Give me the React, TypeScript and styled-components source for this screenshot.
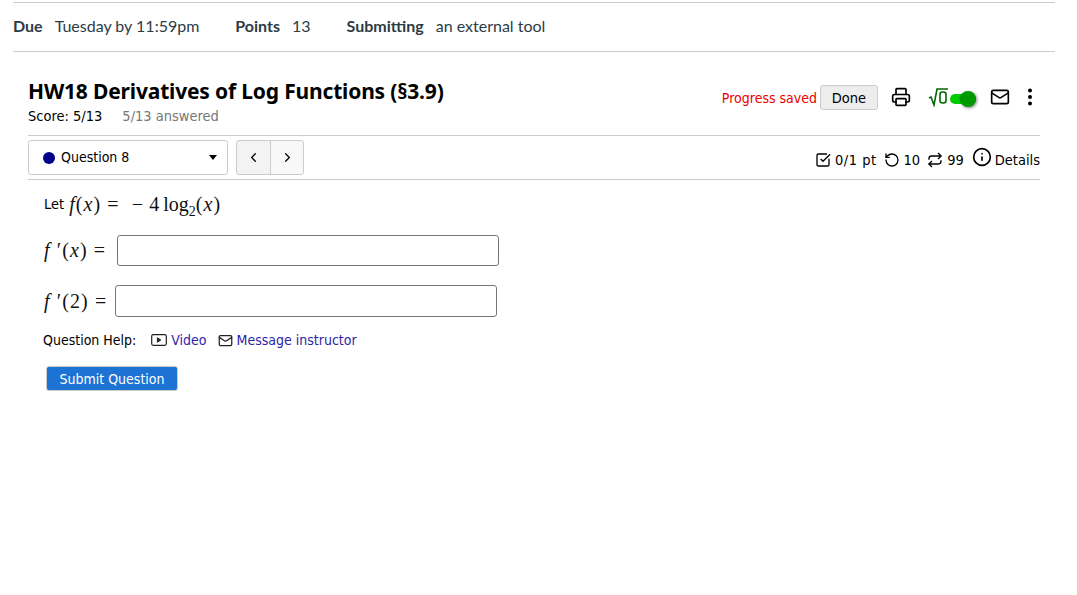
import React from "react";
import styled, { createGlobalStyle } from "styled-components";
import { Printer, Mail, ChevronLeft, ChevronRight, CheckSquare, RotateCcw, Repeat, Info } from "lucide-react";

const Global = createGlobalStyle`
  html, body { margin: 0; padding: 0; background: #fff; }
  body { font-family: "DejaVu Sans Condensed", "DejaVu Sans", sans-serif; }
`;
const Page = styled.div`
  width: 1042px;
  height: 595px;
  margin-left: 13px;
  padding-top: 2px;
  box-sizing: border-box;
`;
const MetaBar = styled.div`
  display: flex;
  align-items: center;
  height: 44px;
  padding-bottom: 4px;
  border-top: 1px solid #c7cdd1;
  border-bottom: 1px solid #c7cdd1;
  font-family: Lato, sans-serif;
  font-size: 16px;
  color: #2d3b45;
`;
const MetaItem = styled.div`
  display: flex;
  gap: 12px;
  margin-right: 36px;
`;
const Strong = styled.span`font-weight: 700;`;
const Player = styled.div`
  padding: 0 15px;
  color: #000;
`;
const Header = styled.div`
  display: flex;
  justify-content: space-between;
  height: 84px;
  padding-top: 26px;
  box-sizing: border-box;
  border-bottom: 1px solid #ccc;
`;
const Title = styled.h1`
  margin: 0;
  font-family: "Noto Sans", sans-serif;
  font-size: 21px;
  letter-spacing: -0.17px;
  line-height: 27px;
  font-weight: 700;
`;
const Score = styled.div`
  display: flex;
  gap: 20px;
  font-size: 14.5px;
  line-height: 18px;
  margin-top: 2px;
`;
const Muted = styled.span`color: #777;`;
const Tools = styled.div`
  display: flex;
  align-items: flex-start;
  padding-top: 7px;
  height: 26px;
`;
const Saved = styled.span`
  color: #e00;
  font-size: 14px;
  line-height: 26px;
  margin-right: 3px;
`;
const DoneButton = styled.button`
  width: 58px;
  height: 25px;
  padding: 0;
  border: 1px solid #ccc;
  border-radius: 3px;
  background: #ededed;
  color: #000;
  font: inherit;
  font-size: 14.5px;
  margin-right: 13px;
`;
const ToolIcon = styled.span<{ $ml?: number }>`
  display: inline-flex;
  width: 20px;
  height: 20px;
  margin-top: 2px;
  margin-left: ${(p) => p.$ml ?? 0}px;
`;
const Sqrt = styled.span`
  display: inline-flex;
  margin: 2px 0 0 17px;
  width: 21px;
  height: 20px;
`;
const Toggle = styled.span`
  position: relative;
  display: inline-block;
  width: 26px;
  height: 10px;
  margin: 9px 0 0 1px;
  border-radius: 5px;
  background: #0c0;
`;
const Knob = styled.span`
  position: absolute;
  right: 0;
  top: -3px;
  width: 16px;
  height: 16px;
  border-radius: 50%;
  background: #090;
  box-shadow: 1px 1px 3px rgba(0,0,0,.5);
`;
const NavRow = styled.div`
  display: flex;
  align-items: center;
  justify-content: space-between;
  height: 43px;
  border-bottom: 1px solid #ccc;
`;
const Left = styled.div`
  display: flex;
  gap: 8px;
  align-items: center;
`;
const Select = styled.div`
  display: flex;
  align-items: center;
  width: 200px;
  height: 35px;
  box-sizing: border-box;
  border: 1px solid #ccc;
  border-radius: 3px;
  padding: 0 10px 0 14px;
  font-size: 14px;
`;
const SelectText = styled.span`margin-bottom: 1px;`;
const Dot = styled.span`
  width: 12px;
  height: 12px;
  border-radius: 50%;
  background: #00008b;
  margin-right: 6px;
`;
const Caret = styled.span`
  margin-left: auto;
  width: 0;
  height: 0;
  border-left: 4px solid transparent;
  border-right: 4px solid transparent;
  border-top: 5px solid #000;
`;
const NavGroup = styled.div`display: flex;`;
const NavButton = styled.button<{ $first?: boolean }>`
  display: flex;
  align-items: center;
  justify-content: center;
  padding: 0;
  width: ${(p) => (p.$first ? 35 : 34)}px;
  height: 35px;
  border: 1px solid #ccc;
  background: ${(p) => (p.$first ? "#f3f3f3" : "#f8f8f8")};
  border-radius: ${(p) => (p.$first ? "3px 0 0 3px" : "0 3px 3px 0")};
  margin-left: ${(p) => (p.$first ? 0 : -1)}px;
  color: #000;
`;
const Stats = styled.div`
  display: flex;
  align-items: center;
  font-size: 14.5px;
  padding-top: 4px;
`;
const Stat = styled.span<{ $gap?: number; $ml?: number; $ls?: number }>`
  display: inline-flex;
  align-items: center;
  gap: ${(p) => p.$gap ?? 4}px;
  margin-left: ${(p) => p.$ml ?? 8}px;
  letter-spacing: ${(p) => p.$ls ?? 0}px;
`;
const InfoWrap = styled.span`
  display: inline-flex;
  margin-top: -6px;
`;
const Body = styled.div`
  padding: 13px 0 0 16px;
  font-size: 14.5px;
`;
const MathLine = styled.div`
  display: flex;
  align-items: center;
  height: 22px;
`;
const LetWord = styled.span`margin-right: 5px;`;
const M = styled.span`
  font-family: "Liberation Serif", serif;
  font-size: 20px;
  letter-spacing: 1.1px;
  white-space: pre;
  color: #111;
`;
const Op = styled.span<{ $ml: number; $ls?: number }>`
  margin-left: ${(p) => p.$ml}px;
  letter-spacing: ${(p) => p.$ls ?? 1.1}px;
`;
const I = styled.i`font-family: "Liberation Serif", serif;`;
const Sub = styled.sub`font-size: 14px; line-height: 0; letter-spacing: 0;`;
const AnswerRow = styled.div<{ $top: number }>`
  display: flex;
  align-items: center;
  margin-top: ${(p) => p.$top}px;
`;
const AnswerLabel = styled.label<{ $w: number }>`
  display: block;
  width: ${(p) => p.$w}px;
`;
const Input = styled.input<{ $h: number }>`
  width: 382px;
  height: ${(p) => p.$h}px;
  box-sizing: border-box;
  border: 1px solid #767676;
  border-radius: 3px;
  background: #fff;
  padding: 0;
`;
const Help = styled.div`
  display: flex;
  align-items: center;
  margin: 14px 0 0 -1px;
  height: 18px;
  font-size: 14px;
`;
const HelpLink = styled.a<{ $ml: number }>`
  display: inline-flex;
  align-items: center;
  gap: 4px;
  margin-left: ${(p) => p.$ml}px;
  color: #2d24a8;
  text-decoration: none;
`;
const HelpIcon = styled.span`display: inline-flex; color: #222;`;
const Submit = styled.button`
  display: block;
  margin: 17px 0 0 2px;
  width: 132px;
  height: 25px;
  padding: 0;
  border: 1px solid #ccc;
  border-radius: 3px;
  background: #1d73d3;
  color: #fff;
  font: inherit;
  font-size: 14px;
`;

const Dots = () => (
  <svg width="20" height="20" viewBox="0 0 20 20" fill="#000"><circle cx="10" cy="3.5" r="2" /><circle cx="10" cy="10" r="2" /><circle cx="10" cy="16.5" r="2" /></svg>
);
const SqrtIcon = () => (
  <svg width="21" height="20" viewBox="0 0 21 20" fill="none" stroke="#060" strokeWidth="1.6"><path d="M1 11l2-1 3 8 3-16h11" /><rect x="12" y="5" width="6" height="11" rx="2.5" /></svg>
);
const VideoIcon = () => (
  <svg width="16" height="12" viewBox="0 0 16 12" fill="none" stroke="#222" strokeWidth="1.2"><rect x=".7" y=".7" width="14.6" height="10.6" rx="1.5" /><path d="M6.4 3.8l3.4 2.2-3.4 2.2z" fill="#222" strokeWidth="1" /></svg>
);

export default function App() {
  return (
    <Page>
      <Global />
      <MetaBar>
        <MetaItem><Strong>Due</Strong><span>Tuesday by 11:59pm</span></MetaItem>
        <MetaItem><Strong>Points</Strong><span>13</span></MetaItem>
        <MetaItem><Strong>Submitting</Strong><span>an external tool</span></MetaItem>
      </MetaBar>
      <Player>
        <Header>
          <div>
            <Title>HW18 Derivatives of Log Functions (§3.9)</Title>
            <Score><span>Score: 5/13</span><Muted>5/13 answered</Muted></Score>
          </div>
          <Tools>
            <Saved>Progress saved</Saved>
            <DoneButton>Done</DoneButton>
            <ToolIcon><Printer size={20} strokeWidth={2} /></ToolIcon>
            <Sqrt><SqrtIcon /></Sqrt>
            <Toggle><Knob /></Toggle>
            <ToolIcon $ml={14}><Mail size={20} strokeWidth={2} /></ToolIcon>
            <ToolIcon $ml={10}><Dots /></ToolIcon>
          </Tools>
        </Header>
        <NavRow>
          <Left>
            <Select><Dot /><SelectText>Question 8</SelectText><Caret /></Select>
            <NavGroup>
              <NavButton $first><ChevronLeft size={15} /></NavButton>
              <NavButton><ChevronRight size={15} /></NavButton>
            </NavGroup>
          </Left>
          <Stats>
            <Stat $ls={0.5}><CheckSquare size={16} />0/1 pt</Stat>
            <Stat $ml={7}><RotateCcw size={16} />10</Stat>
            <Stat $ml={7}><Repeat size={16} />99</Stat>
            <Stat $gap={3}><InfoWrap><Info size={20} /></InfoWrap>Details</Stat>
          </Stats>
        </NavRow>
        <Body>
          <MathLine>
            <LetWord>Let</LetWord>
            <M><I>f</I>(<I>x</I>)<Op $ml={6}>=</Op><Op $ml={12}>−</Op><Op $ml={5}>4</Op><Op $ml={3} $ls={0}>log</Op><Sub>2</Sub>(<I>x</I>)</M>
          </MathLine>
          <AnswerRow $top={20}>
            <AnswerLabel $w={73}><M><I>f</I> ′(<I>x</I>)<Op $ml={6}>=</Op></M></AnswerLabel>
            <Input $h={31} />
          </AnswerRow>
          <AnswerRow $top={19}>
            <AnswerLabel $w={71}><M><I>f</I> ′(2)<Op $ml={6}>=</Op></M></AnswerLabel>
            <Input $h={32} />
          </AnswerRow>
          <Help>
            Question Help:
            <HelpLink $ml={15}><HelpIcon><VideoIcon /></HelpIcon>Video</HelpLink>
            <HelpLink $ml={11}><HelpIcon><Mail size={15} /></HelpIcon>Message instructor</HelpLink>
          </Help>
          <Submit>Submit Question</Submit>
        </Body>
      </Player>
    </Page>
  );
}
